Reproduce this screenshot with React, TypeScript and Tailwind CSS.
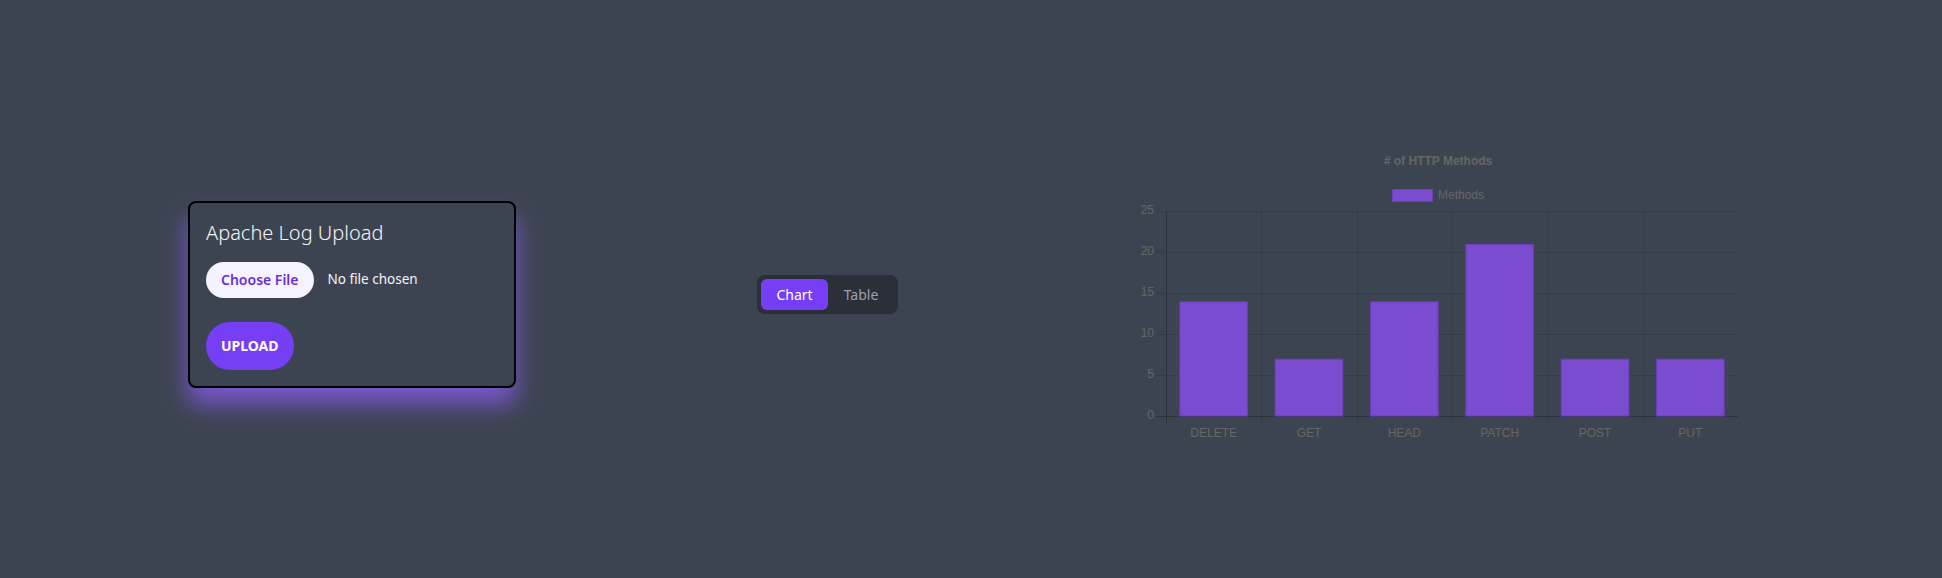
import React, { useState } from 'react';

const methods = [
  { label: 'DELETE', value: 14 },
  { label: 'GET', value: 7 },
  { label: 'HEAD', value: 14 },
  { label: 'PATCH', value: 21 },
  { label: 'POST', value: 7 },
  { label: 'PUT', value: 7 },
];

function MethodsChart() {
  // chart geometry, mirrors a chart.js bar chart
  const left = 38;
  const right = 610;
  const catW = (right - left) / methods.length;
  const barW = catW * 0.72;
  const zeroY = 272;
  const unit = 8.19;
  const y = (v: number) => zeroY - v * unit;
  const ticks = [0, 5, 10, 15, 20, 25];
  const font = { fontFamily: '"Liberation Sans", Arial, sans-serif', fontSize: 12 };

  return (
    <svg width={620} height={300} viewBox="0 0 620 300" className="block">
      <text x={310} y={18} textAnchor="middle" dominantBaseline="middle" fill="#666" fontWeight="bold" style={font}>
        # of HTTP Methods
      </text>
      <rect x={264.5} y={45.5} width={40} height={12} fill="#7b4bd0" stroke="#6a3fb8" />
      <text x={310} y={52} dominantBaseline="middle" fill="#666" style={font}>
        Methods
      </text>

      {ticks.map((t) => (
        <g key={t}>
          <line
            x1={28}
            x2={right}
            y1={Math.round(y(t)) + 0.5}
            y2={Math.round(y(t)) + 0.5}
            stroke={t === 0 ? 'rgba(0,0,0,0.25)' : 'rgba(0,0,0,0.1)'}
          />
          <text x={26} y={y(t)} textAnchor="end" dominantBaseline="middle" fill="#666" style={font}>
            {t}
          </text>
        </g>
      ))}

      {methods.map((_, i) => {
        const x = Math.round(left + catW * i) + 0.5;
        return (
          <line
            key={i}
            x1={x}
            x2={x}
            y1={Math.round(y(25))}
            y2={280}
            stroke={i === 0 ? 'rgba(0,0,0,0.25)' : 'rgba(0,0,0,0.1)'}
          />
        );
      })}

      {methods.map((m, i) => {
        const cx = left + catW * i + catW / 2;
        const top = y(m.value);
        return (
          <g key={m.label}>
            <rect
              x={cx - barW / 2 + 0.5}
              y={top + 0.5}
              width={barW - 1}
              height={zeroY - top - 0.5}
              fill="#7b4bd0"
              stroke="#6a3fb8"
            />
            <text x={cx} y={290} textAnchor="middle" dominantBaseline="middle" fill="#666" style={font}>
              {m.label}
            </text>
          </g>
        );
      })}
    </svg>
  );
}

export default function App() {
  const [tab, setTab] = useState<'chart' | 'table'>('chart');

  return (
    <div
      className="w-[1942px] h-[578px] bg-[#3d4451] overflow-hidden"
      style={{ fontFamily: '"Noto Sans", "Open Sans", sans-serif' }}
    >
      <div className="flex items-center h-[578px] pt-[10px] pl-[188px]">
        <div className="w-[328px] rounded-lg border-2 border-black bg-[#3d4451] p-4 shadow-[0_16px_24px_0_rgba(139,92,246,0.75)]">
          <h2 className="text-xl leading-7 text-gray-100 font-light">Apache Log Upload</h2>
          <div className="mt-[15px] flex items-center gap-[14px]">
            <button className="h-9 rounded-full bg-[#f5f3ff] px-[15px] text-[14px] font-semibold text-[#6b2fd6]">
              Choose File
            </button>
            <span className="text-[13.5px] text-gray-100">No file chosen</span>
          </div>
          <button className="mt-6 h-12 rounded-full bg-[#773ff5] px-[15px] text-[14px] font-bold text-white">
            UPLOAD
          </button>
        </div>

        <div className="ml-[241px] flex rounded-lg bg-[#2b2f38] p-1">
          <button
            onClick={() => setTab('chart')}
            className={`w-[67px] h-[31px] rounded-md text-[14px] ${tab === 'chart' ? 'bg-[#773ff5] text-white' : 'text-gray-400'}`}
          >
            Chart
          </button>
          <button
            onClick={() => setTab('table')}
            className={`w-[66px] h-[31px] rounded-md text-[14px] ${tab === 'table' ? 'bg-[#773ff5] text-white' : 'text-gray-400'}`}
          >
            Table
          </button>
        </div>

        <div className="ml-[230px]">
          <MethodsChart />
        </div>
      </div>
    </div>
  );
}
